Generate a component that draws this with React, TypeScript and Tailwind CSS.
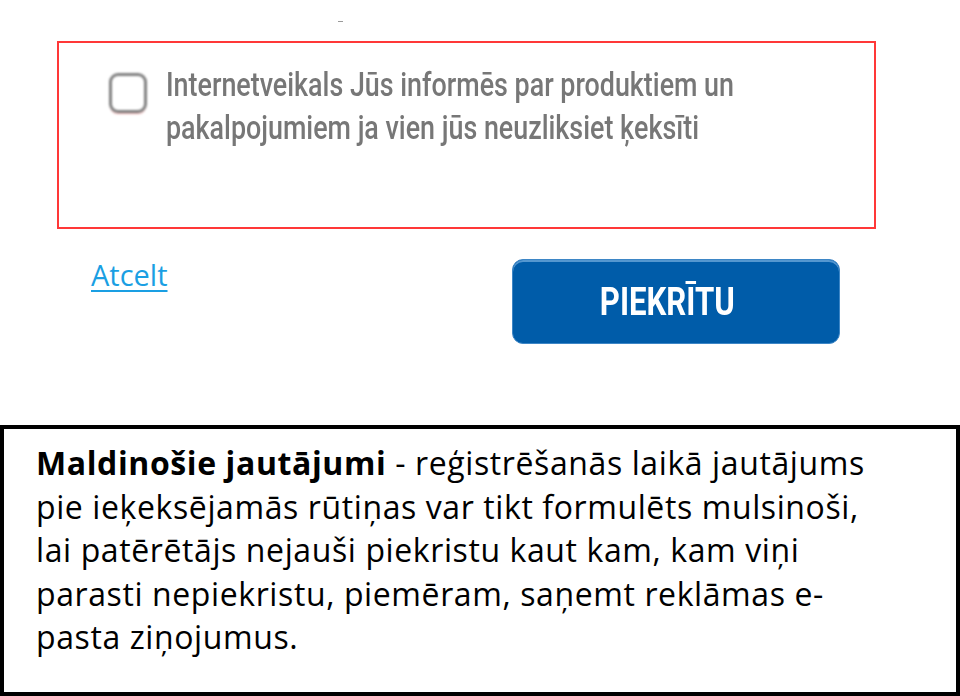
import React from "react";

export default function App() {
  return (
    <div className="w-[960px] h-[696px] bg-white flex flex-col overflow-hidden">
      <div className="h-[41px] pt-[21px] pl-[338px]">
        <div className="w-[5px] h-px bg-[#9a9a9a]" />
      </div>
      <div className="ml-[57px] w-[819px] h-[188px] border-2 border-[#ff3838] flex pl-[50px] pt-[30px]">
        <div className="w-[38px] h-[40px] shrink-0 rounded-[9px] border-[3px] border-[#808080] blur-[0.8px] shadow-[0_2px_1px_-1px_rgba(220,80,80,0.5)]" />
        <div
          className="ml-[19px] -mt-[10px] text-[34px] leading-[43px] font-medium text-[#777777] whitespace-nowrap"
          style={{ fontFamily: "Roboto, sans-serif" }}
        >
          <div className="origin-left scale-x-[0.79]">Internetveikals Jūs informēs par produktiem un</div>
          <div className="origin-left scale-x-[0.79]">pakalpojumiem ja vien jūs neuzliksiet ķeksīti</div>
        </div>
      </div>
      <div className="flex mt-[30px] h-[85px]">
        <a
          href="#"
          className="ml-[91px] text-[29px] leading-[32px] text-[#1a9fe3] underline underline-offset-[4px] decoration-[2px]"
          style={{ fontFamily: "'Open Sans', sans-serif" }}
        >
          Atcelt
        </a>
        <button className="ml-auto mr-[120px] w-[328px] h-[85px] rounded-[11px] bg-[#005ca9] border border-[#3d86c6] shadow-[inset_0_2px_0_rgba(140,190,235,0.6)] flex items-center justify-center pr-[18px]">
          <span
            className="text-white font-bold text-[38px] leading-none scale-x-[0.82]"
            style={{ fontFamily: "Roboto, sans-serif" }}
          >
            PIEKRĪTU
          </span>
        </button>
      </div>
      <div className="mt-[81px] w-[960px] h-[271px] border-4 border-black pl-[32px] pt-[12px]">
        <div
          className="text-[32px] leading-[43.5px] tracking-[0.6px] text-black whitespace-nowrap"
          style={{ fontFamily: "'Open Sans', sans-serif" }}
        >
          <div>
            <span className="font-bold">Maldinošie jautājumi</span> - reģistrēšanās laikā jautājums
          </div>
          <div>pie ieķeksējamās rūtiņas var tikt formulēts mulsinoši,</div>
          <div>lai patērētājs nejauši piekristu kaut kam, kam viņi</div>
          <div>parasti nepiekristu, piemēram, saņemt reklāmas e-</div>
          <div>pasta ziņojumus.</div>
        </div>
      </div>
    </div>
  );
}
